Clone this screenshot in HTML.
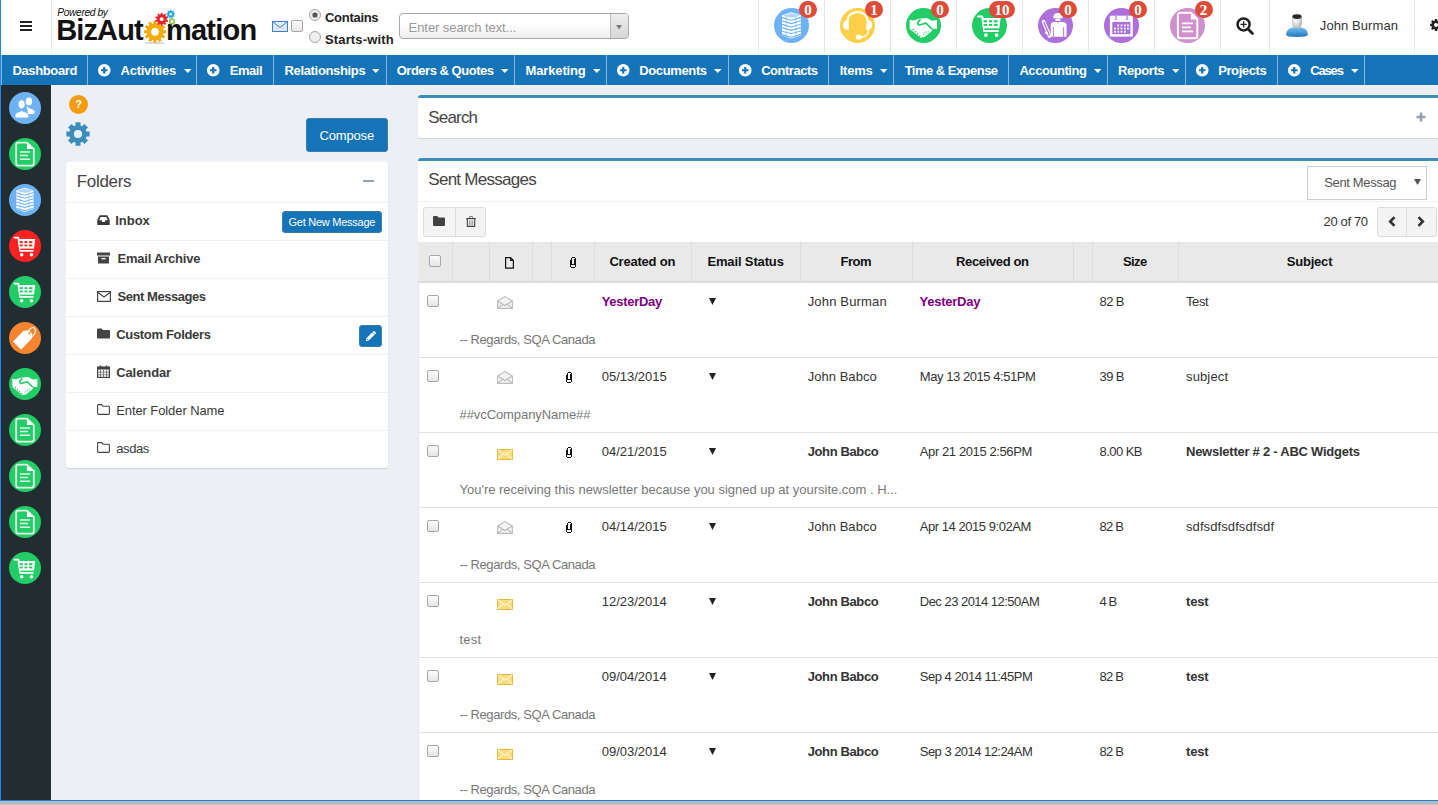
<!DOCTYPE html>
<html><head><meta charset="utf-8">
<style>
*{box-sizing:border-box;margin:0;padding:0}
html,body{width:1438px;height:805px;overflow:hidden}
body{position:relative;background:#ecf0f5;font-family:"Liberation Sans",sans-serif;color:#333;font-size:13px}
.a{position:absolute}
.t{position:absolute;white-space:nowrap;line-height:1}
svg{position:absolute;overflow:visible}
.cb{position:absolute;width:12px;height:12px;border:1px solid #a6a6a6;border-radius:2px;background:linear-gradient(#fdfdfd,#e4e4e4)}
.badge{position:absolute;top:1px;height:17px;border-radius:9px;background:#dd4b39;color:#fff;font-family:"Liberation Serif",serif;font-weight:bold;font-size:15px;line-height:19px;text-align:center;overflow:hidden}
</style></head>
<body>

<div class="a" style="left:0px;top:0px;width:1438px;height:55px;background:#fff;"></div>
<div class="a" style="left:20px;top:21px;width:12px;height:2px;background:#222;"></div>
<div class="a" style="left:20px;top:25px;width:12px;height:2px;background:#222;"></div>
<div class="a" style="left:20px;top:29px;width:12px;height:2px;background:#222;"></div>
<div class="a" style="left:51px;top:0px;width:1px;height:53px;background:#e8e8e8;"></div>
<div class="a" style="left:758px;top:0px;width:1px;height:53px;background:#e8e8e8;"></div>
<div class="a" style="left:824px;top:0px;width:1px;height:53px;background:#e8e8e8;"></div>
<div class="a" style="left:890px;top:0px;width:1px;height:53px;background:#e8e8e8;"></div>
<div class="a" style="left:956px;top:0px;width:1px;height:53px;background:#e8e8e8;"></div>
<div class="a" style="left:1022px;top:0px;width:1px;height:53px;background:#e8e8e8;"></div>
<div class="a" style="left:1088px;top:0px;width:1px;height:53px;background:#e8e8e8;"></div>
<div class="a" style="left:1154px;top:0px;width:1px;height:53px;background:#e8e8e8;"></div>
<div class="a" style="left:1220px;top:0px;width:1px;height:53px;background:#e8e8e8;"></div>
<div class="a" style="left:1269px;top:0px;width:1px;height:53px;background:#e8e8e8;"></div>
<div class="a" style="left:1414px;top:0px;width:1px;height:53px;background:#e8e8e8;"></div>
<div class="t" style="left:57.3px;top:7.67px;font-size:10.2px;font-weight:normal;font-style:italic;color:#111;letter-spacing:-0.348px;font-family:"Liberation Sans",sans-serif;">Powered by</div>
<div class="t" style="left:56.3px;top:15.75px;font-size:29px;font-weight:bold;font-style:normal;color:#111;letter-spacing:-0.903px;font-family:"Liberation Sans",sans-serif;">BizAut</div>
<div class="t" style="left:166px;top:15.75px;font-size:29px;font-weight:bold;font-style:normal;color:#111;letter-spacing:-0.772px;font-family:"Liberation Sans",sans-serif;">mation</div>
<svg style="left:0;top:0" width="1" height="1"><ellipse cx="155" cy="43" rx="11" ry="1.2" fill="#bbb" opacity=".6"/><polygon points="153.50,23.33 153.50,20.80 156.50,20.80 156.50,23.33 156.86,23.40 157.23,23.49 157.58,23.60 157.94,23.72 159.20,21.53 161.80,23.03 160.53,25.22 160.81,25.46 161.08,25.72 161.34,25.99 161.58,26.27 163.77,25.00 165.27,27.60 163.08,28.86 163.20,29.22 163.31,29.57 163.40,29.94 163.47,30.30 166.00,30.30 166.00,33.30 163.47,33.30 163.40,33.66 163.31,34.03 163.20,34.38 163.08,34.74 165.27,36.00 163.77,38.60 161.58,37.33 161.34,37.61 161.08,37.88 160.81,38.14 160.53,38.38 161.80,40.57 159.20,42.07 157.94,39.88 157.58,40.00 157.23,40.11 156.86,40.20 156.50,40.27 156.50,42.80 153.50,42.80 153.50,40.27 153.14,40.20 152.77,40.11 152.42,40.00 152.06,39.88 150.80,42.07 148.20,40.57 149.47,38.38 149.19,38.14 148.92,37.88 148.66,37.61 148.42,37.33 146.23,38.60 144.73,36.00 146.92,34.74 146.80,34.38 146.69,34.03 146.60,33.66 146.53,33.30 144.00,33.30 144.00,30.30 146.53,30.30 146.60,29.94 146.69,29.57 146.80,29.22 146.92,28.86 144.73,27.60 146.23,25.00 148.42,26.27 148.66,25.99 148.92,25.72 149.19,25.46 149.47,25.22 148.20,23.03 150.80,21.53 152.06,23.72 152.42,23.60 152.77,23.49 153.14,23.40" fill="#f4ab0c"/><circle cx="155" cy="31.8" r="3.9" fill="#fff"/><polygon points="160.80,14.28 160.80,12.66 162.60,12.66 162.60,14.28 162.93,14.35 163.25,14.44 163.56,14.56 163.86,14.69 164.82,13.38 166.27,14.44 165.32,15.75 165.54,16.00 165.75,16.26 165.93,16.54 166.10,16.82 167.64,16.32 168.20,18.04 166.66,18.54 166.69,18.87 166.70,19.20 166.69,19.53 166.66,19.86 168.20,20.36 167.64,22.08 166.10,21.58 165.93,21.86 165.75,22.14 165.54,22.40 165.32,22.65 166.27,23.96 164.82,25.02 163.86,23.71 163.56,23.84 163.25,23.96 162.93,24.05 162.60,24.12 162.60,25.74 160.80,25.74 160.80,24.12 160.47,24.05 160.15,23.96 159.84,23.84 159.54,23.71 158.58,25.02 157.13,23.96 158.08,22.65 157.86,22.40 157.65,22.14 157.47,21.86 157.30,21.58 155.76,22.08 155.20,20.36 156.74,19.86 156.71,19.53 156.70,19.20 156.71,18.87 156.74,18.54 155.20,18.04 155.76,16.32 157.30,16.82 157.47,16.54 157.65,16.26 157.86,16.00 158.08,15.75 157.13,14.44 158.58,13.38 159.54,14.69 159.84,14.56 160.15,14.44 160.47,14.35" fill="#e3262d"/><circle cx="161.7" cy="19.2" r="1.9" fill="#fff"/><polygon points="170.05,10.96 170.05,9.85 171.35,9.85 171.35,10.96 171.59,11.02 171.83,11.10 172.06,11.19 172.28,11.30 173.00,10.45 174.00,11.28 173.28,12.14 173.43,12.34 173.56,12.55 173.67,12.77 173.77,13.00 174.87,12.80 175.10,14.08 174.00,14.28 173.98,14.53 173.95,14.77 173.90,15.02 173.83,15.25 174.79,15.81 174.14,16.94 173.18,16.38 173.01,16.56 172.82,16.73 172.62,16.88 172.42,17.02 172.80,18.07 171.58,18.51 171.20,17.46 170.95,17.49 170.70,17.50 170.45,17.49 170.20,17.46 169.82,18.51 168.60,18.07 168.98,17.02 168.78,16.88 168.58,16.73 168.39,16.56 168.22,16.38 167.26,16.94 166.61,15.81 167.57,15.25 167.50,15.02 167.45,14.77 167.42,14.53 167.40,14.28 166.30,14.08 166.53,12.80 167.63,13.00 167.73,12.77 167.84,12.55 167.97,12.34 168.12,12.14 167.40,11.28 168.40,10.45 169.12,11.30 169.34,11.19 169.57,11.10 169.81,11.02" fill="#29a6e3"/><circle cx="170.7" cy="14.2" r="1.3" fill="#fff"/><circle cx="172" cy="21.4" r="2.4" fill="none" stroke="#86c440" stroke-width="1.4"/></svg>
<svg style="left:272px;top:21px" width="16" height="11"><rect x="0.5" y="0.5" width="15" height="10" fill="#dbe9f8" stroke="#3d7fd0"/><path d="M1 1 L8 6.5 L15 1" fill="none" stroke="#3d7fd0"/></svg>
<div class="cb" style="left:291px;top:20px"></div>
<svg style="left:309px;top:9px" width="12" height="12"><circle cx="6" cy="6" r="5.5" fill="#eee" stroke="#a6a6a6"/><circle cx="6" cy="6" r="2.6" fill="#555"/></svg>
<svg style="left:309px;top:31px" width="12" height="12"><circle cx="6" cy="6" r="5.5" fill="#eee" stroke="#a6a6a6"/></svg>
<div class="t" style="left:325px;top:10.70px;font-size:13px;font-weight:bold;font-style:normal;color:#222;letter-spacing:-0.287px;font-family:"Liberation Sans",sans-serif;">Contains</div>
<div class="t" style="left:325px;top:32.70px;font-size:13px;font-weight:bold;font-style:normal;color:#222;letter-spacing:0.143px;font-family:"Liberation Sans",sans-serif;">Starts-with</div>
<div class="a" style="left:399px;top:13px;width:230px;height:26px;border:1px solid #a8a8a8;border-radius:4px;background:linear-gradient(#fff 40%,#eee)"></div>
<div class="a" style="left:610px;top:14px;width:1px;height:24px;background:#bbb;"></div>
<div class="a" style="left:611px;top:14px;width:17px;height:24px;background:linear-gradient(#eee,#d6d6d6);border-radius:0 3px 3px 0"></div>
<svg style="left:616.2px;top:25.4px" width="6" height="5"><path d="M0 0 H6 L3 4.6 Z" fill="#7a7a7a"/></svg>
<div class="t" style="left:408.6px;top:21.00px;font-size:13px;font-weight:normal;font-style:normal;color:#999;letter-spacing:-0.074px;font-family:"Liberation Sans",sans-serif;">Enter search text...</div>
<svg style="left:774.0px;top:8.0px" width="35" height="35" viewBox="0 0 35 35"><circle cx="17.5" cy="17.5" r="17.5" fill="#6eb2f4"/><path d="M8 7.2 L17.2 4.2 L26.8 7.2 V27.4 L17.2 30.5 L8 27.4 Z" fill="#fff"/><path d="M8 9.6 L17.2 12.2 L26.8 9.4" fill="none" stroke="#6eb2f4" stroke-width="1.1"/><path d="M8 13.0 L17.2 15.6 L26.8 12.8" fill="none" stroke="#6eb2f4" stroke-width="1.1"/><path d="M8 16.4 L17.2 19.0 L26.8 16.2" fill="none" stroke="#6eb2f4" stroke-width="1.1"/><path d="M8 19.799999999999997 L17.2 22.4 L26.8 19.599999999999998" fill="none" stroke="#6eb2f4" stroke-width="1.1"/><path d="M8 23.2 L17.2 25.8 L26.8 23.0" fill="none" stroke="#6eb2f4" stroke-width="1.1"/><path d="M8 26.6 L17.2 29.200000000000003 L26.8 26.400000000000002" fill="none" stroke="#6eb2f4" stroke-width="1.1"/><path d="M12.2 8 V29 M21.8 8 V29" stroke="#6eb2f4" stroke-width="0.7" opacity=".7"/><path d="M8.6 7.4 L17.2 9.8 L26.2 7.4 L17.2 5.2 Z" fill="#6eb2f4" opacity=".55"/></svg>
<svg style="left:840.0px;top:8.0px" width="35" height="35" viewBox="0 0 35 35"><circle cx="17.5" cy="17.5" r="17.5" fill="#fecf47"/><path d="M7.2 14 Q8 4.2 17.5 4 Q27 4.2 27.8 14" fill="none" stroke="#fff" stroke-width="1.8"/><path d="M8.8 12 V22.2 Q3 22 3 17 Q3 12 8.8 12 Z" fill="#fff"/><path d="M26.4 12 V22.2 Q32.2 22 32.2 17 Q32.2 12 26.4 12 Z" fill="#fff"/><path d="M28.6 21.5 Q28.4 29.2 20.5 29.2" fill="none" stroke="#fff" stroke-width="1.4"/><ellipse cx="18.7" cy="29" rx="3.1" ry="2.6" fill="#fff"/></svg>
<svg style="left:905.8px;top:8.0px" width="35" height="35" viewBox="0 0 35 35"><circle cx="17.5" cy="17.5" r="17.5" fill="#22cc66"/><path d="M3.7 11.7 L7.9 12.4 L12.4 10.7 L20.9 9.9 L25.8 12.7 L31 11.9 V20.9 L26.8 20.4 L25.6 23.3 L18.9 28.8 L14.4 29.8 L6 22.8 L3.7 20.9 Z" fill="#fff"/><path d="M14.4 11.2 L11.7 14.6 Q11.8 17.3 13.6 17 L19.9 15.1 L26.1 21.1" fill="none" stroke="#22cc66" stroke-width="1.7" stroke-linejoin="round"/><path d="M6.6 22.2 L7.7 21 M8.8 24.3 L9.9 23.1 M11 26.5 L12.1 25.3 M13.2 28.6 L14.3 27.4" stroke="#22cc66" stroke-width="1.2"/><path d="M17.1 27.8 L18.6 23.8 M19.4 26.8 L20.9 22.8 M21.9 25.6 L23.3 22.1" stroke="#22cc66" stroke-width="0.8" opacity=".6"/></svg>
<svg style="left:972.1px;top:8.0px" width="35" height="35" viewBox="0 0 35 35"><circle cx="17.5" cy="17.5" r="17.5" fill="#22cc66"/><path d="M6 8.4 H10.2 L12.2 22.9 H26" stroke="#fff" stroke-width="2" fill="none" stroke-linecap="round" stroke-linejoin="round"/><path d="M9.8 9.9 H28.6 L27.4 20.4 H11.2 Z" fill="#fff"/><circle cx="13.9" cy="27.1" r="1.9" fill="#fff"/><circle cx="24.6" cy="27.1" r="1.9" fill="#fff"/><rect x="11.6" y="12.2" width="3.5" height="2.200000000000001" fill="#22cc66"/><rect x="11.6" y="15.9" width="3.5" height="1.9999999999999982" fill="#22cc66"/><rect x="16.9" y="12.2" width="3.200000000000003" height="2.200000000000001" fill="#22cc66"/><rect x="16.9" y="15.9" width="3.200000000000003" height="1.9999999999999982" fill="#22cc66"/><rect x="21.9" y="12.2" width="3.700000000000003" height="2.200000000000001" fill="#22cc66"/><rect x="21.9" y="15.9" width="3.700000000000003" height="1.9999999999999982" fill="#22cc66"/><rect x="12" y="20.6" width="15" height="1" fill="#22cc66"/></svg>
<svg style="left:1037.9px;top:8.0px" width="35" height="35" viewBox="0 0 35 35"><circle cx="17.5" cy="17.5" r="17.5" fill="#ad70da"/><path d="M15.1 10.2 Q15.4 5 19.9 5 Q24.5 5 24.8 10.2 Z" fill="#fff"/><rect x="17.2" y="10.4" width="5.4" height="2.6" rx="1.3" fill="#fff"/><path d="M12.7 28.8 V17.5 Q12.7 13.9 16.5 13.9 H19.5 L20 16.5 L20.5 13.9 H24.8 Q28.6 13.9 28.6 17.5 V28.8 Z" fill="#fff"/><path d="M15.4 19 V28.8 M25.6 19 V28.8" stroke="#ad70da" stroke-width="0.9"/><path d="M5.6 13.6 L11.6 28" stroke="#fff" stroke-width="3.6" stroke-linecap="round"/><path d="M6 14.2 L11.2 27" stroke="#ad70da" stroke-width="1.4" stroke-linecap="round"/><circle cx="8.6" cy="24.8" r="1.5" fill="#fff"/></svg>
<svg style="left:1104.0px;top:8.0px" width="35" height="35" viewBox="0 0 35 35"><circle cx="17.5" cy="17.5" r="17.5" fill="#ad70da"/><rect x="7.1" y="8.9" width="20.5" height="18.5" fill="none" stroke="#fff" stroke-width="2.4"/><rect x="7.1" y="8.9" width="20.5" height="5" fill="#fff"/><path d="M11.9 6.8 V12 M23.1 6.8 V12" stroke="#ad70da" stroke-width="1.6"/><path d="M11.9 7.2 V11.4 M23.1 7.2 V11.4" stroke="#fff" stroke-width="0.6"/><rect x="13.299999999999999" y="16.5" width="1.8" height="1.8" fill="#fff"/><rect x="16.6" y="16.5" width="1.8" height="1.8" fill="#fff"/><rect x="20.0" y="16.5" width="1.8" height="1.8" fill="#fff"/><rect x="23.0" y="16.5" width="1.8" height="1.8" fill="#fff"/><rect x="10.1" y="19.700000000000003" width="1.8" height="1.8" fill="#fff"/><rect x="13.299999999999999" y="19.700000000000003" width="1.8" height="1.8" fill="#fff"/><rect x="16.6" y="19.700000000000003" width="1.8" height="1.8" fill="#fff"/><rect x="20.0" y="19.700000000000003" width="1.8" height="1.8" fill="#fff"/><rect x="23.0" y="19.700000000000003" width="1.8" height="1.8" fill="#fff"/><rect x="10.1" y="22.8" width="1.8" height="1.8" fill="#fff"/><rect x="13.299999999999999" y="22.8" width="1.8" height="1.8" fill="#fff"/><rect x="16.6" y="22.8" width="1.8" height="1.8" fill="#fff"/><rect x="20.0" y="22.8" width="1.8" height="1.8" fill="#fff"/></svg>
<svg style="left:1169.5px;top:8.0px" width="35" height="35" viewBox="0 0 35 35"><circle cx="17.5" cy="17.5" r="17.5" fill="#d08fcd"/><path d="M10 4.7 H20.9 L27.3 11.2 V27.8 Q27.3 30.3 24.8 30.3 H10 Q7.9 30.3 7.9 27.8 V7.2 Q7.9 4.7 10 4.7 Z" fill="none" stroke="#fff" stroke-width="2"/><path d="M20.9 4.7 V11.5 H27.3 Z" fill="#fff"/><path d="M11.9 15.4 H23.1 M11.9 19.4 H21.1 M11.9 23.3 H23.1" stroke="#fff" stroke-width="1.7"/></svg>
<div class="badge" style="left:799.0px;width:18px">0</div>
<div class="badge" style="left:865.0px;width:18px">1</div>
<div class="badge" style="left:931.0px;width:18px">0</div>
<div class="badge" style="left:989.0px;width:26px">10</div>
<div class="badge" style="left:1059.0px;width:18px">0</div>
<div class="badge" style="left:1129.0px;width:18px">0</div>
<div class="badge" style="left:1194.5px;width:18px">2</div>
<svg style="left:1236px;top:16.8px" width="20" height="20"><circle cx="7.6" cy="7.4" r="6" fill="none" stroke="#1e1e1e" stroke-width="2.5"/><path d="M12 12 L16.5 16.5" stroke="#1e1e1e" stroke-width="2.8" stroke-linecap="round"/><path d="M4.5 7.4 H10.7 M7.6 4.3 V10.5" stroke="#222" stroke-width="1.3"/></svg>
<svg style="left:1286px;top:14px" width="23" height="23"><defs><linearGradient id="ub" x1="0" y1="0" x2="0" y2="1"><stop offset="0" stop-color="#7cc3f0"/><stop offset="1" stop-color="#1f78bf"/></linearGradient><radialGradient id="uh" cx=".4" cy=".45" r=".6"><stop offset="0" stop-color="#fff"/><stop offset="1" stop-color="#b9b9b9"/></radialGradient></defs><path d="M0 20.5 Q0 13.5 11 12.8 Q22 13.5 22 20.5 Q22 23 11 23 Q0 23 0 20.5 Z" fill="url(#ub)"/><path d="M6 4.5 Q6 0.5 11 0.5 Q16 0.5 16 4.5 V9 Q16 14 11 14 Q6 14 6 9 Z" fill="url(#uh)"/><ellipse cx="11" cy="2.6" rx="4.6" ry="2.3" fill="#2a2a2a"/></svg>
<div class="t" style="left:1319.8px;top:19.00px;font-size:13px;font-weight:normal;font-style:normal;color:#333;letter-spacing:0.086px;font-family:"Liberation Sans",sans-serif;">John Burman</div>
<svg style="left:1430px;top:19px" width="12" height="12"><polygon points="4.83,1.55 4.83,0.12 7.17,0.12 7.17,1.55 7.47,1.64 7.76,1.75 8.04,1.88 8.32,2.03 9.33,1.01 10.99,2.67 9.97,3.68 10.12,3.96 10.25,4.24 10.36,4.53 10.45,4.83 11.88,4.83 11.88,7.17 10.45,7.17 10.36,7.47 10.25,7.76 10.12,8.04 9.97,8.32 10.99,9.33 9.33,10.99 8.32,9.97 8.04,10.12 7.76,10.25 7.47,10.36 7.17,10.45 7.17,11.88 4.83,11.88 4.83,10.45 4.53,10.36 4.24,10.25 3.96,10.12 3.68,9.97 2.67,10.99 1.01,9.33 2.03,8.32 1.88,8.04 1.75,7.76 1.64,7.47 1.55,7.17 0.12,7.17 0.12,4.83 1.55,4.83 1.64,4.53 1.75,4.24 1.88,3.96 2.03,3.68 1.01,2.67 2.67,1.01 3.68,2.03 3.96,1.88 4.24,1.75 4.53,1.64" fill="#222"/><circle cx="6" cy="6" r="2" fill="#fff"/></svg>
<div class="a" style="left:0px;top:55px;width:1438px;height:30px;background:#1573b7;"></div>
<div class="a" style="left:87px;top:55px;width:1px;height:30px;background:#8cb5d9;"></div>
<div class="t" style="left:12.4px;top:64.00px;font-size:13px;font-weight:bold;font-style:normal;color:#fff;letter-spacing:-0.363px;font-family:"Liberation Sans",sans-serif;">Dashboard</div>
<div class="a" style="left:196px;top:55px;width:1px;height:30px;background:#8cb5d9;"></div>
<svg style="left:98.0px;top:63.5px" width="13" height="13"><circle cx="6.25" cy="6.25" r="6.25" fill="#fff"/><path d="M3 6.25 H9.5 M6.25 3 V9.5" stroke="#1573b7" stroke-width="2.2"/></svg>
<div class="t" style="left:120.5px;top:64.00px;font-size:13px;font-weight:bold;font-style:normal;color:#fff;letter-spacing:-0.235px;font-family:"Liberation Sans",sans-serif;">Activities</div>
<div class="a" style="left:273px;top:55px;width:1px;height:30px;background:#8cb5d9;"></div>
<svg style="left:207.2px;top:63.5px" width="13" height="13"><circle cx="6.25" cy="6.25" r="6.25" fill="#fff"/><path d="M3 6.25 H9.5 M6.25 3 V9.5" stroke="#1573b7" stroke-width="2.2"/></svg>
<div class="t" style="left:229.7px;top:64.00px;font-size:13px;font-weight:bold;font-style:normal;color:#fff;letter-spacing:-0.447px;font-family:"Liberation Sans",sans-serif;">Email</div>
<div class="a" style="left:386px;top:55px;width:1px;height:30px;background:#8cb5d9;"></div>
<div class="t" style="left:284.5px;top:64.00px;font-size:13px;font-weight:bold;font-style:normal;color:#fff;letter-spacing:-0.336px;font-family:"Liberation Sans",sans-serif;">Relationships</div>
<div class="a" style="left:514px;top:55px;width:1px;height:30px;background:#8cb5d9;"></div>
<div class="t" style="left:396.7px;top:64.00px;font-size:13px;font-weight:bold;font-style:normal;color:#fff;letter-spacing:-0.481px;font-family:"Liberation Sans",sans-serif;">Orders &amp; Quotes</div>
<div class="a" style="left:606px;top:55px;width:1px;height:30px;background:#8cb5d9;"></div>
<div class="t" style="left:525.5px;top:64.00px;font-size:13px;font-weight:bold;font-style:normal;color:#fff;letter-spacing:-0.138px;font-family:"Liberation Sans",sans-serif;">Marketing</div>
<div class="a" style="left:728px;top:55px;width:1px;height:30px;background:#8cb5d9;"></div>
<svg style="left:616.7px;top:63.5px" width="13" height="13"><circle cx="6.25" cy="6.25" r="6.25" fill="#fff"/><path d="M3 6.25 H9.5 M6.25 3 V9.5" stroke="#1573b7" stroke-width="2.2"/></svg>
<div class="t" style="left:639.2px;top:64.00px;font-size:13px;font-weight:bold;font-style:normal;color:#fff;letter-spacing:-0.362px;font-family:"Liberation Sans",sans-serif;">Documents</div>
<div class="a" style="left:828px;top:55px;width:1px;height:30px;background:#8cb5d9;"></div>
<svg style="left:738.7px;top:63.5px" width="13" height="13"><circle cx="6.25" cy="6.25" r="6.25" fill="#fff"/><path d="M3 6.25 H9.5 M6.25 3 V9.5" stroke="#1573b7" stroke-width="2.2"/></svg>
<div class="t" style="left:761.2px;top:64.00px;font-size:13px;font-weight:bold;font-style:normal;color:#fff;letter-spacing:-0.486px;font-family:"Liberation Sans",sans-serif;">Contracts</div>
<div class="a" style="left:893px;top:55px;width:1px;height:30px;background:#8cb5d9;"></div>
<div class="t" style="left:839.7px;top:64.00px;font-size:13px;font-weight:bold;font-style:normal;color:#fff;letter-spacing:-0.217px;font-family:"Liberation Sans",sans-serif;">Items</div>
<div class="a" style="left:1008px;top:55px;width:1px;height:30px;background:#8cb5d9;"></div>
<div class="t" style="left:904.7px;top:64.00px;font-size:13px;font-weight:bold;font-style:normal;color:#fff;letter-spacing:-0.523px;font-family:"Liberation Sans",sans-serif;">Time &amp; Expense</div>
<div class="a" style="left:1107px;top:55px;width:1px;height:30px;background:#8cb5d9;"></div>
<div class="t" style="left:1019.4px;top:64.00px;font-size:13px;font-weight:bold;font-style:normal;color:#fff;letter-spacing:-0.432px;font-family:"Liberation Sans",sans-serif;">Accounting</div>
<div class="a" style="left:1185px;top:55px;width:1px;height:30px;background:#8cb5d9;"></div>
<div class="t" style="left:1118px;top:64.00px;font-size:13px;font-weight:bold;font-style:normal;color:#fff;letter-spacing:-0.421px;font-family:"Liberation Sans",sans-serif;">Reports</div>
<div class="a" style="left:1277px;top:55px;width:1px;height:30px;background:#8cb5d9;"></div>
<svg style="left:1195.7px;top:63.5px" width="13" height="13"><circle cx="6.25" cy="6.25" r="6.25" fill="#fff"/><path d="M3 6.25 H9.5 M6.25 3 V9.5" stroke="#1573b7" stroke-width="2.2"/></svg>
<div class="t" style="left:1218.2px;top:64.00px;font-size:13px;font-weight:bold;font-style:normal;color:#fff;letter-spacing:-0.402px;font-family:"Liberation Sans",sans-serif;">Projects</div>
<div class="a" style="left:1364px;top:55px;width:1px;height:30px;background:#8cb5d9;"></div>
<svg style="left:1287.8px;top:63.5px" width="13" height="13"><circle cx="6.25" cy="6.25" r="6.25" fill="#fff"/><path d="M3 6.25 H9.5 M6.25 3 V9.5" stroke="#1573b7" stroke-width="2.2"/></svg>
<div class="t" style="left:1310.3px;top:64.00px;font-size:13px;font-weight:bold;font-style:normal;color:#fff;letter-spacing:-1.182px;font-family:"Liberation Sans",sans-serif;">Cases</div>
<div class="a" style="left:1px;top:55px;width:1px;height:30px;background:#8cb5d9;"></div>
<svg style="left:183.6px;top:68.5px" width="8" height="4"><path d="M0 0 H7.5 L3.75 4 Z" fill="#fff"/></svg>
<svg style="left:372.4px;top:68.5px" width="8" height="4"><path d="M0 0 H7.5 L3.75 4 Z" fill="#fff"/></svg>
<svg style="left:501px;top:68.5px" width="8" height="4"><path d="M0 0 H7.5 L3.75 4 Z" fill="#fff"/></svg>
<svg style="left:593px;top:68.5px" width="8" height="4"><path d="M0 0 H7.5 L3.75 4 Z" fill="#fff"/></svg>
<svg style="left:714px;top:68.5px" width="8" height="4"><path d="M0 0 H7.5 L3.75 4 Z" fill="#fff"/></svg>
<svg style="left:880px;top:68.5px" width="8" height="4"><path d="M0 0 H7.5 L3.75 4 Z" fill="#fff"/></svg>
<svg style="left:1094px;top:68.5px" width="8" height="4"><path d="M0 0 H7.5 L3.75 4 Z" fill="#fff"/></svg>
<svg style="left:1172px;top:68.5px" width="8" height="4"><path d="M0 0 H7.5 L3.75 4 Z" fill="#fff"/></svg>
<svg style="left:1351px;top:68.5px" width="8" height="4"><path d="M0 0 H7.5 L3.75 4 Z" fill="#fff"/></svg>
<div class="a" style="left:1px;top:85px;width:50px;height:715px;background:#222d32;"></div>
<svg style="left:9.0px;top:91.8px" width="32" height="32" viewBox="0 0 32 32"><circle cx="16.0" cy="16.0" r="16.0" fill="#6eb2f4"/><ellipse cx="19.9" cy="9.4" rx="3.2" ry="3.9" fill="#fff"/><path d="M17.5 12.5 Q17.8 15.6 21 16.4 Q26 17.6 26 20.5 Q26 22 23.5 22 H19 Z" fill="#fff"/><ellipse cx="12.6" cy="12.3" rx="3.6" ry="4.6" fill="#fff" stroke="#6eb2f4" stroke-width="1"/><path d="M5.9 24.6 Q5.9 20.4 11 19.6 L12.6 18.4 L14.2 19.6 Q19.9 20.4 19.9 24.6 Q19.9 26 18 26 H7.8 Q5.9 26 5.9 24.6 Z" fill="#fff" stroke="#6eb2f4" stroke-width="0.8"/></svg>
<svg style="left:9.0px;top:137.8px" width="32" height="32" viewBox="0 0 32 32"><circle cx="16.0" cy="16.0" r="16.0" fill="#22cc66"/><path d="M9 4.7 H17.9 L24.8 10.9 V25.6 Q24.8 27.6 22.8 27.6 H9.2 Q7.2 27.6 7.2 25.6 V6.7 Q7.2 4.7 9 4.7 Z" fill="none" stroke="#e2f7e8" stroke-width="1.8"/><path d="M17.9 4.9 L24.6 10.9 H17.9 Z" fill="#fff"/><path d="M10.9 14.1 H21.1 M10.9 17.6 H19.1 M10.9 21.3 H21.1" stroke="#e2f7e8" stroke-width="1.5"/></svg>
<svg style="left:9.0px;top:183.8px" width="32" height="32" viewBox="0 0 35 35"><circle cx="17.5" cy="17.5" r="17.5" fill="#6eb2f4"/><path d="M8 7.2 L17.2 4.2 L26.8 7.2 V27.4 L17.2 30.5 L8 27.4 Z" fill="#fff"/><path d="M8 9.6 L17.2 12.2 L26.8 9.4" fill="none" stroke="#6eb2f4" stroke-width="1.1"/><path d="M8 13.0 L17.2 15.6 L26.8 12.8" fill="none" stroke="#6eb2f4" stroke-width="1.1"/><path d="M8 16.4 L17.2 19.0 L26.8 16.2" fill="none" stroke="#6eb2f4" stroke-width="1.1"/><path d="M8 19.799999999999997 L17.2 22.4 L26.8 19.599999999999998" fill="none" stroke="#6eb2f4" stroke-width="1.1"/><path d="M8 23.2 L17.2 25.8 L26.8 23.0" fill="none" stroke="#6eb2f4" stroke-width="1.1"/><path d="M8 26.6 L17.2 29.200000000000003 L26.8 26.400000000000002" fill="none" stroke="#6eb2f4" stroke-width="1.1"/><path d="M12.2 8 V29 M21.8 8 V29" stroke="#6eb2f4" stroke-width="0.7" opacity=".7"/><path d="M8.6 7.4 L17.2 9.8 L26.2 7.4 L17.2 5.2 Z" fill="#6eb2f4" opacity=".55"/></svg>
<svg style="left:9.0px;top:229.8px" width="32" height="32" viewBox="0 0 35 35"><circle cx="17.5" cy="17.5" r="17.5" fill="#fd2222"/><path d="M6 8.4 H10.2 L12.2 22.9 H26" stroke="#fff" stroke-width="2" fill="none" stroke-linecap="round" stroke-linejoin="round"/><path d="M9.8 9.9 H28.6 L27.4 20.4 H11.2 Z" fill="#fff"/><circle cx="13.9" cy="27.1" r="1.9" fill="#fff"/><circle cx="24.6" cy="27.1" r="1.9" fill="#fff"/><rect x="11.6" y="12.2" width="3.5" height="2.200000000000001" fill="#fd2222"/><rect x="11.6" y="15.9" width="3.5" height="1.9999999999999982" fill="#fd2222"/><rect x="16.9" y="12.2" width="3.200000000000003" height="2.200000000000001" fill="#fd2222"/><rect x="16.9" y="15.9" width="3.200000000000003" height="1.9999999999999982" fill="#fd2222"/><rect x="21.9" y="12.2" width="3.700000000000003" height="2.200000000000001" fill="#fd2222"/><rect x="21.9" y="15.9" width="3.700000000000003" height="1.9999999999999982" fill="#fd2222"/><rect x="12" y="20.6" width="15" height="1" fill="#fd2222"/></svg>
<svg style="left:9.0px;top:275.8px" width="32" height="32" viewBox="0 0 35 35"><circle cx="17.5" cy="17.5" r="17.5" fill="#22cc66"/><path d="M6 8.4 H10.2 L12.2 22.9 H26" stroke="#fff" stroke-width="2" fill="none" stroke-linecap="round" stroke-linejoin="round"/><path d="M9.8 9.9 H28.6 L27.4 20.4 H11.2 Z" fill="#fff"/><circle cx="13.9" cy="27.1" r="1.9" fill="#fff"/><circle cx="24.6" cy="27.1" r="1.9" fill="#fff"/><rect x="11.6" y="12.2" width="3.5" height="2.200000000000001" fill="#22cc66"/><rect x="11.6" y="15.9" width="3.5" height="1.9999999999999982" fill="#22cc66"/><rect x="16.9" y="12.2" width="3.200000000000003" height="2.200000000000001" fill="#22cc66"/><rect x="16.9" y="15.9" width="3.200000000000003" height="1.9999999999999982" fill="#22cc66"/><rect x="21.9" y="12.2" width="3.700000000000003" height="2.200000000000001" fill="#22cc66"/><rect x="21.9" y="15.9" width="3.700000000000003" height="1.9999999999999982" fill="#22cc66"/><rect x="12" y="20.6" width="15" height="1" fill="#22cc66"/></svg>
<svg style="left:9.0px;top:321.8px" width="32" height="32" viewBox="0 0 32 32"><circle cx="16.0" cy="16.0" r="16.0" fill="#f7842f"/><path d="M4.4 19.2 L14.2 9 L19.5 8.2 L23.3 12 L22.6 16.8 L12.6 27.2 Q12.2 27.6 11.8 27.2 L4.4 20 Q4 19.6 4.4 19.2 Z" fill="#fff"/><circle cx="20.2" cy="11.4" r="1.2" fill="#f7842f"/><ellipse cx="22.6" cy="10.4" rx="3.2" ry="5.2" transform="rotate(28 22.6 10.4)" fill="none" stroke="#fff" stroke-width="1.3" opacity=".9"/></svg>
<svg style="left:9.0px;top:367.8px" width="32" height="32" viewBox="0 0 35 35"><circle cx="17.5" cy="17.5" r="17.5" fill="#22cc66"/><path d="M3.7 11.7 L7.9 12.4 L12.4 10.7 L20.9 9.9 L25.8 12.7 L31 11.9 V20.9 L26.8 20.4 L25.6 23.3 L18.9 28.8 L14.4 29.8 L6 22.8 L3.7 20.9 Z" fill="#fff"/><path d="M14.4 11.2 L11.7 14.6 Q11.8 17.3 13.6 17 L19.9 15.1 L26.1 21.1" fill="none" stroke="#22cc66" stroke-width="1.7" stroke-linejoin="round"/><path d="M6.6 22.2 L7.7 21 M8.8 24.3 L9.9 23.1 M11 26.5 L12.1 25.3 M13.2 28.6 L14.3 27.4" stroke="#22cc66" stroke-width="1.2"/><path d="M17.1 27.8 L18.6 23.8 M19.4 26.8 L20.9 22.8 M21.9 25.6 L23.3 22.1" stroke="#22cc66" stroke-width="0.8" opacity=".6"/></svg>
<svg style="left:9.0px;top:413.8px" width="32" height="32" viewBox="0 0 32 32"><circle cx="16.0" cy="16.0" r="16.0" fill="#22cc66"/><path d="M9 4.7 H17.9 L24.8 10.9 V25.6 Q24.8 27.6 22.8 27.6 H9.2 Q7.2 27.6 7.2 25.6 V6.7 Q7.2 4.7 9 4.7 Z" fill="none" stroke="#e2f7e8" stroke-width="1.8"/><path d="M17.9 4.9 L24.6 10.9 H17.9 Z" fill="#fff"/><path d="M10.9 14.1 H21.1 M10.9 17.6 H19.1 M10.9 21.3 H21.1" stroke="#e2f7e8" stroke-width="1.5"/></svg>
<svg style="left:9.0px;top:459.8px" width="32" height="32" viewBox="0 0 32 32"><circle cx="16.0" cy="16.0" r="16.0" fill="#22cc66"/><path d="M9 4.7 H17.9 L24.8 10.9 V25.6 Q24.8 27.6 22.8 27.6 H9.2 Q7.2 27.6 7.2 25.6 V6.7 Q7.2 4.7 9 4.7 Z" fill="none" stroke="#e2f7e8" stroke-width="1.8"/><path d="M17.9 4.9 L24.6 10.9 H17.9 Z" fill="#fff"/><path d="M10.9 14.1 H21.1 M10.9 17.6 H19.1 M10.9 21.3 H21.1" stroke="#e2f7e8" stroke-width="1.5"/></svg>
<svg style="left:9.0px;top:505.79999999999995px" width="32" height="32" viewBox="0 0 32 32"><circle cx="16.0" cy="16.0" r="16.0" fill="#22cc66"/><path d="M9 4.7 H17.9 L24.8 10.9 V25.6 Q24.8 27.6 22.8 27.6 H9.2 Q7.2 27.6 7.2 25.6 V6.7 Q7.2 4.7 9 4.7 Z" fill="none" stroke="#e2f7e8" stroke-width="1.8"/><path d="M17.9 4.9 L24.6 10.9 H17.9 Z" fill="#fff"/><path d="M10.9 14.1 H21.1 M10.9 17.6 H19.1 M10.9 21.3 H21.1" stroke="#e2f7e8" stroke-width="1.5"/></svg>
<svg style="left:9.0px;top:551.8px" width="32" height="32" viewBox="0 0 35 35"><circle cx="17.5" cy="17.5" r="17.5" fill="#22cc66"/><path d="M6 8.4 H10.2 L12.2 22.9 H26" stroke="#fff" stroke-width="2" fill="none" stroke-linecap="round" stroke-linejoin="round"/><path d="M9.8 9.9 H28.6 L27.4 20.4 H11.2 Z" fill="#fff"/><circle cx="13.9" cy="27.1" r="1.9" fill="#fff"/><circle cx="24.6" cy="27.1" r="1.9" fill="#fff"/><rect x="11.6" y="12.2" width="3.5" height="2.200000000000001" fill="#22cc66"/><rect x="11.6" y="15.9" width="3.5" height="1.9999999999999982" fill="#22cc66"/><rect x="16.9" y="12.2" width="3.200000000000003" height="2.200000000000001" fill="#22cc66"/><rect x="16.9" y="15.9" width="3.200000000000003" height="1.9999999999999982" fill="#22cc66"/><rect x="21.9" y="12.2" width="3.700000000000003" height="2.200000000000001" fill="#22cc66"/><rect x="21.9" y="15.9" width="3.700000000000003" height="1.9999999999999982" fill="#22cc66"/><rect x="12" y="20.6" width="15" height="1" fill="#22cc66"/></svg>
<svg style="left:69px;top:94.5px" width="19" height="19"><circle cx="9.5" cy="9.5" r="9.5" fill="#f39c12"/></svg>
<div class="t" style="left:75.2px;top:99.19px;font-size:11px;font-weight:bold;font-style:normal;color:#fff;font-family:"Liberation Sans",sans-serif;">?</div>
<svg style="left:66px;top:122px" width="24" height="24"><polygon points="9.50,3.56 9.50,0.37 14.50,0.37 14.50,3.56 14.94,3.70 15.37,3.87 15.79,4.06 16.20,4.27 18.46,2.01 21.99,5.54 19.73,7.80 19.94,8.21 20.13,8.63 20.30,9.06 20.44,9.50 23.63,9.50 23.63,14.50 20.44,14.50 20.30,14.94 20.13,15.37 19.94,15.79 19.73,16.20 21.99,18.46 18.46,21.99 16.20,19.73 15.79,19.94 15.37,20.13 14.94,20.30 14.50,20.44 14.50,23.63 9.50,23.63 9.50,20.44 9.06,20.30 8.63,20.13 8.21,19.94 7.80,19.73 5.54,21.99 2.01,18.46 4.27,16.20 4.06,15.79 3.87,15.37 3.70,14.94 3.56,14.50 0.37,14.50 0.37,9.50 3.56,9.50 3.70,9.06 3.87,8.63 4.06,8.21 4.27,7.80 2.01,5.54 5.54,2.01 7.80,4.27 8.21,4.06 8.63,3.87 9.06,3.70" fill="#3c8dbc"/><circle cx="12" cy="12" r="4.1" fill="#ecf0f5"/></svg>
<div class="a" style="left:306px;top:118px;width:82px;height:34px;background:#1573b7;border:1px solid #3a7fab;border-radius:3px"></div>
<div class="t" style="left:319.6px;top:129.00px;font-size:13px;font-weight:normal;font-style:normal;color:#fff;letter-spacing:-0.176px;font-family:"Liberation Sans",sans-serif;">Compose</div>
<div class="a" style="left:66px;top:162px;width:322px;height:306px;background:#fff;border-radius:3px;box-shadow:0 1px 1px rgba(0,0,0,.12)"></div>
<div class="t" style="left:76.8px;top:172.81px;font-size:17px;font-weight:normal;font-style:normal;color:#444;letter-spacing:-0.331px;font-family:"Liberation Sans",sans-serif;">Folders</div>
<div class="a" style="left:362.5px;top:179.5px;width:11px;height:2px;background:#97a0b3;"></div>
<div class="a" style="left:66px;top:202px;width:322px;height:1px;background:#f0f0f0;"></div>
<div class="a" style="left:66px;top:240px;width:322px;height:1px;background:#f0f0f0;"></div>
<div class="a" style="left:66px;top:278px;width:322px;height:1px;background:#f0f0f0;"></div>
<div class="a" style="left:66px;top:316px;width:322px;height:1px;background:#f0f0f0;"></div>
<div class="a" style="left:66px;top:354px;width:322px;height:1px;background:#f0f0f0;"></div>
<div class="a" style="left:66px;top:392px;width:322px;height:1px;background:#f0f0f0;"></div>
<div class="a" style="left:66px;top:430px;width:322px;height:1px;background:#f0f0f0;"></div>
<div class="t" style="left:115.2px;top:214.40px;font-size:13px;font-weight:bold;font-style:normal;color:#3a3a3a;letter-spacing:-0.014px;font-family:"Liberation Sans",sans-serif;">Inbox</div>
<svg style="left:96.5px;top:214.9px" width="13" height="11"><path d="M0.3 5 L2.6 0.3 H10.4 L12.7 5 V10 H0.3 Z" fill="#3a3a3a"/><path d="M2.2 5.2 H4.6 L5.3 6.9 H7.7 L8.4 5.2 H10.8 L9.4 2 H3.6 Z" fill="#fff"/></svg>
<div class="t" style="left:117.5px;top:252.00px;font-size:13px;font-weight:bold;font-style:normal;color:#3a3a3a;letter-spacing:-0.21px;font-family:"Liberation Sans",sans-serif;">Email Archive</div>
<svg style="left:97px;top:252.0px" width="13" height="12"><rect x="0" y="0.5" width="13" height="3" fill="#444"/><rect x="1" y="4.5" width="11" height="7" fill="#444"/><rect x="4.5" y="6" width="4" height="1.3" fill="#fff"/></svg>
<div class="t" style="left:117.5px;top:290.00px;font-size:13px;font-weight:bold;font-style:normal;color:#3a3a3a;letter-spacing:-0.454px;font-family:"Liberation Sans",sans-serif;">Sent Messages</div>
<svg style="left:97px;top:290.5px" width="14" height="11"><rect x="0.6" y="0.6" width="12.8" height="9.8" fill="none" stroke="#444" stroke-width="1.2"/><path d="M1 1.5 L7 6 L13 1.5" fill="none" stroke="#444" stroke-width="1.2"/></svg>
<div class="t" style="left:116.2px;top:328.00px;font-size:13px;font-weight:bold;font-style:normal;color:#3a3a3a;letter-spacing:-0.319px;font-family:"Liberation Sans",sans-serif;">Custom Folders</div>
<svg style="left:97px;top:328.0px" width="13" height="11"><path d="M0 1.5 Q0 0.5 1 0.5 H4.5 L6 2 H12 Q13 2 13 3 V10 Q13 10.5 12 10.5 H1 Q0 10.5 0 9.5 Z" fill="#444"/></svg>
<div class="t" style="left:116.2px;top:366.00px;font-size:13px;font-weight:bold;font-style:normal;color:#3a3a3a;letter-spacing:-0.092px;font-family:"Liberation Sans",sans-serif;">Calendar</div>
<svg style="left:97px;top:365.0px" width="13" height="13"><rect x="0.6" y="2" width="11.8" height="10.4" fill="none" stroke="#444" stroke-width="1.2"/><rect x="0.6" y="2" width="11.8" height="2.5" fill="#444"/><path d="M3.5 0.5 V3 M9.5 0.5 V3" stroke="#444" stroke-width="1.4"/><path d="M0.6 7.2 H12.4 M0.6 9.8 H12.4 M3.5 4.5 V12.4 M6.5 4.5 V12.4 M9.5 4.5 V12.4" stroke="#555" stroke-width="0.7"/></svg>
<div class="t" style="left:116.2px;top:404.00px;font-size:13px;font-weight:normal;font-style:normal;color:#3a3a3a;letter-spacing:-0.09px;font-family:"Liberation Sans",sans-serif;">Enter Folder Name</div>
<svg style="left:97px;top:404.0px" width="13" height="11"><path d="M0.6 1.5 Q0.6 0.6 1.5 0.6 H4.5 L6 2.2 H11.5 Q12.4 2.2 12.4 3.1 V9.5 Q12.4 10.4 11.5 10.4 H1.5 Q0.6 10.4 0.6 9.5 Z" fill="none" stroke="#444" stroke-width="1.1"/></svg>
<div class="t" style="left:116.2px;top:442.00px;font-size:13px;font-weight:normal;font-style:normal;color:#3a3a3a;letter-spacing:-0.376px;font-family:"Liberation Sans",sans-serif;">asdas</div>
<svg style="left:97px;top:442.0px" width="13" height="11"><path d="M0.6 1.5 Q0.6 0.6 1.5 0.6 H4.5 L6 2.2 H11.5 Q12.4 2.2 12.4 3.1 V9.5 Q12.4 10.4 11.5 10.4 H1.5 Q0.6 10.4 0.6 9.5 Z" fill="none" stroke="#444" stroke-width="1.1"/></svg>
<div class="a" style="left:282px;top:211px;width:100px;height:22px;background:#1573b7;border:1px solid #3a7fab;border-radius:3px"></div>
<div class="t" style="left:288.5px;top:216.69px;font-size:11px;font-weight:normal;font-style:normal;color:#fff;letter-spacing:-0.252px;font-family:"Liberation Sans",sans-serif;">Get New Message</div>
<div class="a" style="left:359px;top:325px;width:23px;height:22px;background:#1573b7;border:1px solid #3a7fab;border-radius:3px"></div>
<svg style="left:364.5px;top:330px" width="12" height="12"><path d="M0.8 11.2 L1.4 8.2 L8.4 1.2 Q9 0.6 9.6 1.2 L10.8 2.4 Q11.4 3 10.8 3.6 L3.8 10.6 Z" fill="#fff"/><path d="M1.6 8.4 L3.6 10.4 M7.4 2.2 L9.8 4.6" stroke="#1573b7" stroke-width="0.8"/></svg>
<div class="a" style="left:418px;top:95px;width:1030px;height:43px;background:#fff;border-top:3px solid #3c8dbc;border-radius:3px;box-shadow:0 1px 1px rgba(0,0,0,.12)"></div>
<div class="t" style="left:428.3px;top:108.51px;font-size:17px;font-weight:normal;font-style:normal;color:#444;letter-spacing:-0.832px;font-family:"Liberation Sans",sans-serif;">Search</div>
<svg style="left:1416px;top:112px" width="10" height="10"><path d="M5 0.5 V9.5 M0.5 5 H9.5" stroke="#97a0b3" stroke-width="2.6"/></svg>
<div class="a" style="left:418px;top:158px;width:1030px;height:700px;background:#fff;border-top:3px solid #3c8dbc;border-radius:3px"></div>
<div class="t" style="left:428.3px;top:171.11px;font-size:17px;font-weight:normal;font-style:normal;color:#444;letter-spacing:-0.73px;font-family:"Liberation Sans",sans-serif;">Sent Messages</div>
<div class="a" style="left:1307px;top:166px;width:120px;height:33.5px;border:1px solid #c9cdd6;background:#fff"></div>
<div class="t" style="left:1324.2px;top:176.20px;font-size:13px;font-weight:normal;font-style:normal;color:#555;letter-spacing:-0.349px;font-family:"Liberation Sans",sans-serif;">Sent Messag</div>
<svg style="left:1413.5px;top:179px" width="7" height="6"><path d="M0 0 H7 L3.5 6 Z" fill="#555"/></svg>
<div class="a" style="left:418px;top:201px;width:1020px;height:1px;background:#f2f2f2;"></div>
<div class="a" style="left:423px;top:207px;width:63px;height:29.5px;border:1px solid #ddd;border-radius:3px;background:#f4f4f4"></div>
<div class="a" style="left:455px;top:207.5px;width:1px;height:29px;background:#ddd;"></div>
<svg style="left:433px;top:216.3px" width="12" height="10"><path d="M0 1 Q0 0 1 0 H4.2 L5.5 1.4 H11 Q12 1.4 12 2.4 V9 Q12 10 11 10 H1 Q0 10 0 9 Z" fill="#424242"/></svg>
<svg style="left:466px;top:216px" width="10" height="11"><path d="M0.2 2.6 H9.8" stroke="#444" stroke-width="1.2"/><path d="M3.4 2.2 V1 Q3.4 0.5 4 0.5 H6 Q6.6 0.5 6.6 1 V2.2" fill="none" stroke="#666" stroke-width="0.9"/><path d="M1.3 3 V10.4 H8.7 V3" fill="none" stroke="#444" stroke-width="1.1"/><path d="M3.4 4.4 V9.2 M5 4.4 V9.2 M6.6 4.4 V9.2" stroke="#888" stroke-width="0.8"/></svg>
<div class="t" style="left:1323.5px;top:215.00px;font-size:13px;font-weight:normal;font-style:normal;color:#333;letter-spacing:-0.343px;font-family:"Liberation Sans",sans-serif;">20 of 70</div>
<div class="a" style="left:1377px;top:207px;width:59.5px;height:29.5px;border:1px solid #ddd;border-radius:3px;background:#f4f4f4"></div>
<div class="a" style="left:1406px;top:207.5px;width:1px;height:29px;background:#ddd;"></div>
<svg style="left:1388px;top:216px" width="8" height="11"><path d="M6.5 1.2 L2.2 5.5 L6.5 9.8" fill="none" stroke="#333" stroke-width="2.6"/></svg>
<svg style="left:1417px;top:216px" width="8" height="11"><path d="M1.5 1.2 L5.8 5.5 L1.5 9.8" fill="none" stroke="#333" stroke-width="2.6"/></svg>
<div class="a" style="left:418px;top:242px;width:1020px;height:40px;background:#e9e9e9;"></div>
<div class="a" style="left:418px;top:281px;width:1020px;height:2px;background:#dedede;"></div>
<div class="a" style="left:418px;top:283px;width:1px;height:517px;background:#e4e6ea;"></div>
<div class="a" style="left:452px;top:242px;width:1px;height:40px;background:#dcdcdc;"></div>
<div class="a" style="left:489px;top:242px;width:1px;height:40px;background:#dcdcdc;"></div>
<div class="a" style="left:532px;top:242px;width:1px;height:40px;background:#dcdcdc;"></div>
<div class="a" style="left:551px;top:242px;width:1px;height:40px;background:#dcdcdc;"></div>
<div class="a" style="left:594px;top:242px;width:1px;height:40px;background:#dcdcdc;"></div>
<div class="a" style="left:691px;top:242px;width:1px;height:40px;background:#dcdcdc;"></div>
<div class="a" style="left:800px;top:242px;width:1px;height:40px;background:#dcdcdc;"></div>
<div class="a" style="left:912px;top:242px;width:1px;height:40px;background:#dcdcdc;"></div>
<div class="a" style="left:1073px;top:242px;width:1px;height:40px;background:#dcdcdc;"></div>
<div class="a" style="left:1092px;top:242px;width:1px;height:40px;background:#dcdcdc;"></div>
<div class="a" style="left:1178px;top:242px;width:1px;height:40px;background:#dcdcdc;"></div>
<div class="cb" style="left:429px;top:255px"></div>
<svg style="left:505px;top:257px" width="9" height="12"><path d="M0.6 0.6 H5.6 L8.4 3.4 V11.2 H0.6 Z M5.6 0.6 V3.4 H8.4" fill="none" stroke="#111" stroke-width="1.2"/></svg>
<svg style="left:570px;top:257px" width="6" height="11"><g fill="#111" shape-rendering="crispEdges"><rect x="2" y="0" width="1" height="1"/><rect x="3" y="0" width="1" height="1"/><rect x="4" y="0" width="1" height="1"/><rect x="1" y="1" width="1" height="1"/><rect x="5" y="1" width="1" height="1"/><rect x="1" y="2" width="1" height="1"/><rect x="4" y="2" width="1" height="1"/><rect x="5" y="2" width="1" height="1"/><rect x="0" y="3" width="1" height="1"/><rect x="1" y="3" width="1" height="1"/><rect x="4" y="3" width="1" height="1"/><rect x="5" y="3" width="1" height="1"/><rect x="0" y="4" width="1" height="1"/><rect x="1" y="4" width="1" height="1"/><rect x="4" y="4" width="1" height="1"/><rect x="5" y="4" width="1" height="1"/><rect x="0" y="5" width="1" height="1"/><rect x="1" y="5" width="1" height="1"/><rect x="4" y="5" width="1" height="1"/><rect x="5" y="5" width="1" height="1"/><rect x="0" y="6" width="1" height="1"/><rect x="1" y="6" width="1" height="1"/><rect x="4" y="6" width="1" height="1"/><rect x="5" y="6" width="1" height="1"/><rect x="0" y="7" width="1" height="1"/><rect x="1" y="7" width="1" height="1"/><rect x="2" y="7" width="1" height="1"/><rect x="3" y="7" width="1" height="1"/><rect x="4" y="7" width="1" height="1"/><rect x="5" y="7" width="1" height="1"/><rect x="0" y="8" width="1" height="1"/><rect x="5" y="8" width="1" height="1"/><rect x="0" y="9" width="1" height="1"/><rect x="5" y="9" width="1" height="1"/><rect x="1" y="10" width="1" height="1"/><rect x="2" y="10" width="1" height="1"/><rect x="3" y="10" width="1" height="1"/><rect x="4" y="10" width="1" height="1"/></g></svg>
<div class="t" style="left:609.4px;top:255.30px;font-size:13px;font-weight:bold;font-style:normal;color:#111;letter-spacing:-0.212px;font-family:"Liberation Sans",sans-serif;">Created on</div>
<div class="t" style="left:707.4px;top:255.30px;font-size:13px;font-weight:bold;font-style:normal;color:#111;letter-spacing:-0.139px;font-family:"Liberation Sans",sans-serif;">Email Status</div>
<div class="t" style="left:840.6px;top:255.30px;font-size:13px;font-weight:bold;font-style:normal;color:#111;letter-spacing:-0.5px;font-family:"Liberation Sans",sans-serif;">From</div>
<div class="t" style="left:956px;top:255.30px;font-size:13px;font-weight:bold;font-style:normal;color:#111;letter-spacing:-0.359px;font-family:"Liberation Sans",sans-serif;">Received on</div>
<div class="t" style="left:1122.9px;top:255.30px;font-size:13px;font-weight:bold;font-style:normal;color:#111;letter-spacing:-0.572px;font-family:"Liberation Sans",sans-serif;">Size</div>
<div class="t" style="left:1286.7px;top:255.30px;font-size:13px;font-weight:bold;font-style:normal;color:#111;letter-spacing:-0.192px;font-family:"Liberation Sans",sans-serif;">Subject</div>
<div class="a" style="left:419px;top:357px;width:1019px;height:1px;background:#e3e3e3;"></div>
<div class="cb" style="left:427px;top:295px"></div>
<svg style="left:497px;top:296.0px" width="16" height="13"><path d="M0.6 5 L8 0.6 L15.4 5 V12.4 H0.6 Z" fill="#f3f3f3" stroke="#bcbcbc" stroke-width="1.1"/><path d="M0.6 5 L8 9.5 L15.4 5 M0.6 12.4 L6 8 M15.4 12.4 L10 8" fill="none" stroke="#bcbcbc" stroke-width="1.1"/></svg>
<div class="t" style="left:601.7px;top:295.10px;font-size:13px;font-weight:bold;font-style:normal;color:#800080;letter-spacing:-0.301px;font-family:"Liberation Sans",sans-serif;">YesterDay</div>
<div class="t" style="left:919.5px;top:295.10px;font-size:13px;font-weight:bold;font-style:normal;color:#800080;letter-spacing:-0.251px;font-family:"Liberation Sans",sans-serif;">YesterDay</div>
<svg style="left:708.5px;top:297.5px" width="7" height="7"><path d="M0 0 H7 L3.5 7 Z" fill="#222"/></svg>
<div class="t" style="left:807.7px;top:295.10px;font-size:13px;font-weight:normal;font-style:normal;color:#333;letter-spacing:0.166px;font-family:"Liberation Sans",sans-serif;">John Burman</div>
<div class="t" style="left:1099.5px;top:295.10px;font-size:13px;font-weight:normal;font-style:normal;color:#333;letter-spacing:-0.583px;font-family:"Liberation Sans",sans-serif;">82 B</div>
<div class="t" style="left:1186px;top:295.10px;font-size:13px;font-weight:normal;font-style:normal;color:#333;letter-spacing:-0.381px;font-family:"Liberation Sans",sans-serif;">Test</div>
<div class="t" style="left:459.5px;top:333.00px;font-size:13px;font-weight:normal;font-style:normal;color:#777;letter-spacing:-0.407px;font-family:"Liberation Sans",sans-serif;">-- Regards, SQA Canada</div>
<div class="a" style="left:419px;top:432px;width:1019px;height:1px;background:#e3e3e3;"></div>
<div class="cb" style="left:427px;top:370px"></div>
<svg style="left:497px;top:371.0px" width="16" height="13"><path d="M0.6 5 L8 0.6 L15.4 5 V12.4 H0.6 Z" fill="#f3f3f3" stroke="#bcbcbc" stroke-width="1.1"/><path d="M0.6 5 L8 9.5 L15.4 5 M0.6 12.4 L6 8 M15.4 12.4 L10 8" fill="none" stroke="#bcbcbc" stroke-width="1.1"/></svg>
<svg style="left:566px;top:372px" width="6" height="11"><g fill="#111" shape-rendering="crispEdges"><rect x="2" y="0" width="1" height="1"/><rect x="3" y="0" width="1" height="1"/><rect x="4" y="0" width="1" height="1"/><rect x="1" y="1" width="1" height="1"/><rect x="5" y="1" width="1" height="1"/><rect x="1" y="2" width="1" height="1"/><rect x="4" y="2" width="1" height="1"/><rect x="5" y="2" width="1" height="1"/><rect x="0" y="3" width="1" height="1"/><rect x="1" y="3" width="1" height="1"/><rect x="4" y="3" width="1" height="1"/><rect x="5" y="3" width="1" height="1"/><rect x="0" y="4" width="1" height="1"/><rect x="1" y="4" width="1" height="1"/><rect x="4" y="4" width="1" height="1"/><rect x="5" y="4" width="1" height="1"/><rect x="0" y="5" width="1" height="1"/><rect x="1" y="5" width="1" height="1"/><rect x="4" y="5" width="1" height="1"/><rect x="5" y="5" width="1" height="1"/><rect x="0" y="6" width="1" height="1"/><rect x="1" y="6" width="1" height="1"/><rect x="4" y="6" width="1" height="1"/><rect x="5" y="6" width="1" height="1"/><rect x="0" y="7" width="1" height="1"/><rect x="1" y="7" width="1" height="1"/><rect x="2" y="7" width="1" height="1"/><rect x="3" y="7" width="1" height="1"/><rect x="4" y="7" width="1" height="1"/><rect x="5" y="7" width="1" height="1"/><rect x="0" y="8" width="1" height="1"/><rect x="5" y="8" width="1" height="1"/><rect x="0" y="9" width="1" height="1"/><rect x="5" y="9" width="1" height="1"/><rect x="1" y="10" width="1" height="1"/><rect x="2" y="10" width="1" height="1"/><rect x="3" y="10" width="1" height="1"/><rect x="4" y="10" width="1" height="1"/></g></svg>
<div class="t" style="left:601.7px;top:370.10px;font-size:13px;font-weight:normal;font-style:normal;color:#333;letter-spacing:-0.01px;font-family:"Liberation Sans",sans-serif;">05/13/2015</div>
<div class="t" style="left:919.8px;top:370.10px;font-size:13px;font-weight:normal;font-style:normal;color:#333;letter-spacing:-0.448px;font-family:"Liberation Sans",sans-serif;">May 13 2015 4:51PM</div>
<svg style="left:708.5px;top:372.5px" width="7" height="7"><path d="M0 0 H7 L3.5 7 Z" fill="#222"/></svg>
<div class="t" style="left:807.7px;top:370.10px;font-size:13px;font-weight:normal;font-style:normal;color:#333;letter-spacing:0.035px;font-family:"Liberation Sans",sans-serif;">John Babco</div>
<div class="t" style="left:1099.5px;top:370.10px;font-size:13px;font-weight:normal;font-style:normal;color:#333;letter-spacing:-0.583px;font-family:"Liberation Sans",sans-serif;">39 B</div>
<div class="t" style="left:1186px;top:370.10px;font-size:13px;font-weight:normal;font-style:normal;color:#333;letter-spacing:0.133px;font-family:"Liberation Sans",sans-serif;">subject</div>
<div class="t" style="left:459.5px;top:408.00px;font-size:13px;font-weight:normal;font-style:normal;color:#777;letter-spacing:-0.08px;font-family:"Liberation Sans",sans-serif;">##vcCompanyName##</div>
<div class="a" style="left:419px;top:507px;width:1019px;height:1px;background:#e3e3e3;"></div>
<div class="cb" style="left:427px;top:445px"></div>
<svg style="left:497px;top:449.0px" width="16" height="11"><rect x="0.5" y="0.5" width="15" height="10" fill="#f8dc7e" stroke="#e3b93f"/><path d="M0.8 0.8 L8 6 L15.2 0.8 M0.8 10.2 L6 5 M15.2 10.2 L10 5" fill="none" stroke="#fff3c8" stroke-width="1.1"/></svg>
<svg style="left:566px;top:447px" width="6" height="11"><g fill="#111" shape-rendering="crispEdges"><rect x="2" y="0" width="1" height="1"/><rect x="3" y="0" width="1" height="1"/><rect x="4" y="0" width="1" height="1"/><rect x="1" y="1" width="1" height="1"/><rect x="5" y="1" width="1" height="1"/><rect x="1" y="2" width="1" height="1"/><rect x="4" y="2" width="1" height="1"/><rect x="5" y="2" width="1" height="1"/><rect x="0" y="3" width="1" height="1"/><rect x="1" y="3" width="1" height="1"/><rect x="4" y="3" width="1" height="1"/><rect x="5" y="3" width="1" height="1"/><rect x="0" y="4" width="1" height="1"/><rect x="1" y="4" width="1" height="1"/><rect x="4" y="4" width="1" height="1"/><rect x="5" y="4" width="1" height="1"/><rect x="0" y="5" width="1" height="1"/><rect x="1" y="5" width="1" height="1"/><rect x="4" y="5" width="1" height="1"/><rect x="5" y="5" width="1" height="1"/><rect x="0" y="6" width="1" height="1"/><rect x="1" y="6" width="1" height="1"/><rect x="4" y="6" width="1" height="1"/><rect x="5" y="6" width="1" height="1"/><rect x="0" y="7" width="1" height="1"/><rect x="1" y="7" width="1" height="1"/><rect x="2" y="7" width="1" height="1"/><rect x="3" y="7" width="1" height="1"/><rect x="4" y="7" width="1" height="1"/><rect x="5" y="7" width="1" height="1"/><rect x="0" y="8" width="1" height="1"/><rect x="5" y="8" width="1" height="1"/><rect x="0" y="9" width="1" height="1"/><rect x="5" y="9" width="1" height="1"/><rect x="1" y="10" width="1" height="1"/><rect x="2" y="10" width="1" height="1"/><rect x="3" y="10" width="1" height="1"/><rect x="4" y="10" width="1" height="1"/></g></svg>
<div class="t" style="left:601.7px;top:445.10px;font-size:13px;font-weight:normal;font-style:normal;color:#333;letter-spacing:-0.01px;font-family:"Liberation Sans",sans-serif;">04/21/2015</div>
<div class="t" style="left:919.8px;top:445.10px;font-size:13px;font-weight:normal;font-style:normal;color:#333;letter-spacing:-0.399px;font-family:"Liberation Sans",sans-serif;">Apr 21 2015 2:56PM</div>
<svg style="left:708.5px;top:447.5px" width="7" height="7"><path d="M0 0 H7 L3.5 7 Z" fill="#222"/></svg>
<div class="t" style="left:807.7px;top:445.10px;font-size:13px;font-weight:bold;font-style:normal;color:#333;letter-spacing:-0.377px;font-family:"Liberation Sans",sans-serif;">John Babco</div>
<div class="t" style="left:1099.5px;top:445.10px;font-size:13px;font-weight:normal;font-style:normal;color:#333;letter-spacing:-0.544px;font-family:"Liberation Sans",sans-serif;">8.00 KB</div>
<div class="t" style="left:1186px;top:445.10px;font-size:13px;font-weight:bold;font-style:normal;color:#333;letter-spacing:-0.249px;font-family:"Liberation Sans",sans-serif;">Newsletter # 2 - ABC Widgets</div>
<div class="t" style="left:459.5px;top:483.00px;font-size:13px;font-weight:normal;font-style:normal;color:#777;letter-spacing:-0.007px;font-family:"Liberation Sans",sans-serif;">You're receiving this newsletter because you signed up at yoursite.com . H...</div>
<div class="a" style="left:419px;top:582px;width:1019px;height:1px;background:#e3e3e3;"></div>
<div class="cb" style="left:427px;top:520px"></div>
<svg style="left:497px;top:521.0px" width="16" height="13"><path d="M0.6 5 L8 0.6 L15.4 5 V12.4 H0.6 Z" fill="#f3f3f3" stroke="#bcbcbc" stroke-width="1.1"/><path d="M0.6 5 L8 9.5 L15.4 5 M0.6 12.4 L6 8 M15.4 12.4 L10 8" fill="none" stroke="#bcbcbc" stroke-width="1.1"/></svg>
<svg style="left:566px;top:522px" width="6" height="11"><g fill="#111" shape-rendering="crispEdges"><rect x="2" y="0" width="1" height="1"/><rect x="3" y="0" width="1" height="1"/><rect x="4" y="0" width="1" height="1"/><rect x="1" y="1" width="1" height="1"/><rect x="5" y="1" width="1" height="1"/><rect x="1" y="2" width="1" height="1"/><rect x="4" y="2" width="1" height="1"/><rect x="5" y="2" width="1" height="1"/><rect x="0" y="3" width="1" height="1"/><rect x="1" y="3" width="1" height="1"/><rect x="4" y="3" width="1" height="1"/><rect x="5" y="3" width="1" height="1"/><rect x="0" y="4" width="1" height="1"/><rect x="1" y="4" width="1" height="1"/><rect x="4" y="4" width="1" height="1"/><rect x="5" y="4" width="1" height="1"/><rect x="0" y="5" width="1" height="1"/><rect x="1" y="5" width="1" height="1"/><rect x="4" y="5" width="1" height="1"/><rect x="5" y="5" width="1" height="1"/><rect x="0" y="6" width="1" height="1"/><rect x="1" y="6" width="1" height="1"/><rect x="4" y="6" width="1" height="1"/><rect x="5" y="6" width="1" height="1"/><rect x="0" y="7" width="1" height="1"/><rect x="1" y="7" width="1" height="1"/><rect x="2" y="7" width="1" height="1"/><rect x="3" y="7" width="1" height="1"/><rect x="4" y="7" width="1" height="1"/><rect x="5" y="7" width="1" height="1"/><rect x="0" y="8" width="1" height="1"/><rect x="5" y="8" width="1" height="1"/><rect x="0" y="9" width="1" height="1"/><rect x="5" y="9" width="1" height="1"/><rect x="1" y="10" width="1" height="1"/><rect x="2" y="10" width="1" height="1"/><rect x="3" y="10" width="1" height="1"/><rect x="4" y="10" width="1" height="1"/></g></svg>
<div class="t" style="left:601.7px;top:520.10px;font-size:13px;font-weight:normal;font-style:normal;color:#333;letter-spacing:-0.01px;font-family:"Liberation Sans",sans-serif;">04/14/2015</div>
<div class="t" style="left:919.8px;top:520.10px;font-size:13px;font-weight:normal;font-style:normal;color:#333;letter-spacing:-0.458px;font-family:"Liberation Sans",sans-serif;">Apr 14 2015 9:02AM</div>
<svg style="left:708.5px;top:522.5px" width="7" height="7"><path d="M0 0 H7 L3.5 7 Z" fill="#222"/></svg>
<div class="t" style="left:807.7px;top:520.10px;font-size:13px;font-weight:normal;font-style:normal;color:#333;letter-spacing:0.035px;font-family:"Liberation Sans",sans-serif;">John Babco</div>
<div class="t" style="left:1099.5px;top:520.10px;font-size:13px;font-weight:normal;font-style:normal;color:#333;letter-spacing:-0.75px;font-family:"Liberation Sans",sans-serif;">82 B</div>
<div class="t" style="left:1186px;top:520.10px;font-size:13px;font-weight:normal;font-style:normal;color:#333;letter-spacing:0.092px;font-family:"Liberation Sans",sans-serif;">sdfsdfsdfsdfsdf</div>
<div class="t" style="left:459.5px;top:558.00px;font-size:13px;font-weight:normal;font-style:normal;color:#777;letter-spacing:-0.407px;font-family:"Liberation Sans",sans-serif;">-- Regards, SQA Canada</div>
<div class="a" style="left:419px;top:657px;width:1019px;height:1px;background:#e3e3e3;"></div>
<div class="cb" style="left:427px;top:595px"></div>
<svg style="left:497px;top:599.0px" width="16" height="11"><rect x="0.5" y="0.5" width="15" height="10" fill="#f8dc7e" stroke="#e3b93f"/><path d="M0.8 0.8 L8 6 L15.2 0.8 M0.8 10.2 L6 5 M15.2 10.2 L10 5" fill="none" stroke="#fff3c8" stroke-width="1.1"/></svg>
<div class="t" style="left:601.7px;top:595.10px;font-size:13px;font-weight:normal;font-style:normal;color:#333;letter-spacing:-0.01px;font-family:"Liberation Sans",sans-serif;">12/23/2014</div>
<div class="t" style="left:919.8px;top:595.10px;font-size:13px;font-weight:normal;font-style:normal;color:#333;letter-spacing:-0.523px;font-family:"Liberation Sans",sans-serif;">Dec 23 2014 12:50AM</div>
<svg style="left:708.5px;top:597.5px" width="7" height="7"><path d="M0 0 H7 L3.5 7 Z" fill="#222"/></svg>
<div class="t" style="left:807.7px;top:595.10px;font-size:13px;font-weight:bold;font-style:normal;color:#333;letter-spacing:-0.377px;font-family:"Liberation Sans",sans-serif;">John Babco</div>
<div class="t" style="left:1099.5px;top:595.10px;font-size:13px;font-weight:normal;font-style:normal;color:#333;letter-spacing:-0.958px;font-family:"Liberation Sans",sans-serif;">4 B</div>
<div class="t" style="left:1186px;top:595.10px;font-size:13px;font-weight:bold;font-style:normal;color:#333;letter-spacing:-0.175px;font-family:"Liberation Sans",sans-serif;">test</div>
<div class="t" style="left:459.5px;top:633.00px;font-size:13px;font-weight:normal;font-style:normal;color:#777;letter-spacing:0.216px;font-family:"Liberation Sans",sans-serif;">test</div>
<div class="a" style="left:419px;top:732px;width:1019px;height:1px;background:#e3e3e3;"></div>
<div class="cb" style="left:427px;top:670px"></div>
<svg style="left:497px;top:674.0px" width="16" height="11"><rect x="0.5" y="0.5" width="15" height="10" fill="#f8dc7e" stroke="#e3b93f"/><path d="M0.8 0.8 L8 6 L15.2 0.8 M0.8 10.2 L6 5 M15.2 10.2 L10 5" fill="none" stroke="#fff3c8" stroke-width="1.1"/></svg>
<div class="t" style="left:601.7px;top:670.10px;font-size:13px;font-weight:normal;font-style:normal;color:#333;letter-spacing:-0.01px;font-family:"Liberation Sans",sans-serif;">09/04/2014</div>
<div class="t" style="left:919.8px;top:670.10px;font-size:13px;font-weight:normal;font-style:normal;color:#333;letter-spacing:-0.483px;font-family:"Liberation Sans",sans-serif;">Sep 4 2014 11:45PM</div>
<svg style="left:708.5px;top:672.5px" width="7" height="7"><path d="M0 0 H7 L3.5 7 Z" fill="#222"/></svg>
<div class="t" style="left:807.7px;top:670.10px;font-size:13px;font-weight:bold;font-style:normal;color:#333;letter-spacing:-0.377px;font-family:"Liberation Sans",sans-serif;">John Babco</div>
<div class="t" style="left:1099.5px;top:670.10px;font-size:13px;font-weight:normal;font-style:normal;color:#333;letter-spacing:-0.75px;font-family:"Liberation Sans",sans-serif;">82 B</div>
<div class="t" style="left:1186px;top:670.10px;font-size:13px;font-weight:bold;font-style:normal;color:#333;letter-spacing:-0.175px;font-family:"Liberation Sans",sans-serif;">test</div>
<div class="t" style="left:459.5px;top:708.00px;font-size:13px;font-weight:normal;font-style:normal;color:#777;letter-spacing:-0.407px;font-family:"Liberation Sans",sans-serif;">-- Regards, SQA Canada</div>
<div class="cb" style="left:427px;top:745px"></div>
<svg style="left:497px;top:749.0px" width="16" height="11"><rect x="0.5" y="0.5" width="15" height="10" fill="#f8dc7e" stroke="#e3b93f"/><path d="M0.8 0.8 L8 6 L15.2 0.8 M0.8 10.2 L6 5 M15.2 10.2 L10 5" fill="none" stroke="#fff3c8" stroke-width="1.1"/></svg>
<div class="t" style="left:601.7px;top:745.10px;font-size:13px;font-weight:normal;font-style:normal;color:#333;letter-spacing:-0.01px;font-family:"Liberation Sans",sans-serif;">09/03/2014</div>
<div class="t" style="left:919.8px;top:745.10px;font-size:13px;font-weight:normal;font-style:normal;color:#333;letter-spacing:-0.54px;font-family:"Liberation Sans",sans-serif;">Sep 3 2014 12:24AM</div>
<svg style="left:708.5px;top:747.5px" width="7" height="7"><path d="M0 0 H7 L3.5 7 Z" fill="#222"/></svg>
<div class="t" style="left:807.7px;top:745.10px;font-size:13px;font-weight:bold;font-style:normal;color:#333;letter-spacing:-0.377px;font-family:"Liberation Sans",sans-serif;">John Babco</div>
<div class="t" style="left:1099.5px;top:745.10px;font-size:13px;font-weight:normal;font-style:normal;color:#333;letter-spacing:-0.75px;font-family:"Liberation Sans",sans-serif;">82 B</div>
<div class="t" style="left:1186px;top:745.10px;font-size:13px;font-weight:bold;font-style:normal;color:#333;letter-spacing:-0.175px;font-family:"Liberation Sans",sans-serif;">test</div>
<div class="t" style="left:459.5px;top:783.00px;font-size:13px;font-weight:normal;font-style:normal;color:#777;letter-spacing:-0.407px;font-family:"Liberation Sans",sans-serif;">-- Regards, SQA Canada</div>
<div class="a" style="left:0px;top:0px;width:1px;height:801px;background:#1e88e5;"></div>
<div class="a" style="left:0px;top:800px;width:1438px;height:1px;background:#1b80d8;"></div>
<div class="a" style="left:0;top:801px;width:1438px;height:4px;background:linear-gradient(#afb4bd,#bcc1ca)"></div>
</body></html>
